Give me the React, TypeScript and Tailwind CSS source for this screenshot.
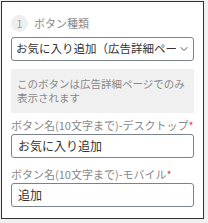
import { ChevronDown } from "lucide-react";

const font = { fontFamily: '"Noto Sans CJK JP", "Noto Sans", sans-serif' };

function Field({ label, value }: { label: string; value: string }) {
  return (
    <div className="flex flex-col">
      <label className="text-[11px] leading-[14px] text-[#888]">
        {label}
        <span className="text-[#e5484d]">*</span>
      </label>
      <div className="mt-[2px] h-[24px] rounded-[3px] border border-[#7a828c] px-[6px] flex items-center text-[12px] text-[#333]">
        {value}
      </div>
    </div>
  );
}

export default function App() {
  return (
    <div className="w-[208px] h-[223px] bg-[#f0f0f0] p-px" style={font}>
      <div className="w-[203px] h-[218px] bg-white border border-[#333] px-[9px] pt-[13px]">
        <div className="flex items-center gap-[6px] h-[16px]">
          <span className="w-[17px] h-[17px] rounded-full bg-[#eeeeee] text-[#999] text-[10px] flex items-center justify-center">
            1
          </span>
          <span className="text-[11px] text-[#888]">ボタン種類</span>
        </div>

        <div className="mt-[6px] h-[24px] rounded-[3px] border border-[#7a828c] pl-[4px] pr-[3px] flex items-center gap-[2px]">
          <span className="flex-1 text-[11.5px] text-[#333] whitespace-nowrap overflow-hidden">
            お気に入り追加（広告詳細ページ）
          </span>
          <ChevronDown size={12} strokeWidth={2} className="text-[#555] shrink-0" />
        </div>

        <div className="mt-[8px] bg-[#f0f0f0] px-[6px] py-[8px] text-[10.5px] leading-[14px] text-[#888]">
          このボタンは広告詳細ページでのみ表示されます
        </div>

        <div className="mt-[5px] flex flex-col gap-[9px]">
          <Field label="ボタン名(10文字まで)-デスクトップ" value="お気に入り追加" />
          <Field label="ボタン名(10文字まで)-モバイル" value="追加" />
        </div>
      </div>
    </div>
  );
}
